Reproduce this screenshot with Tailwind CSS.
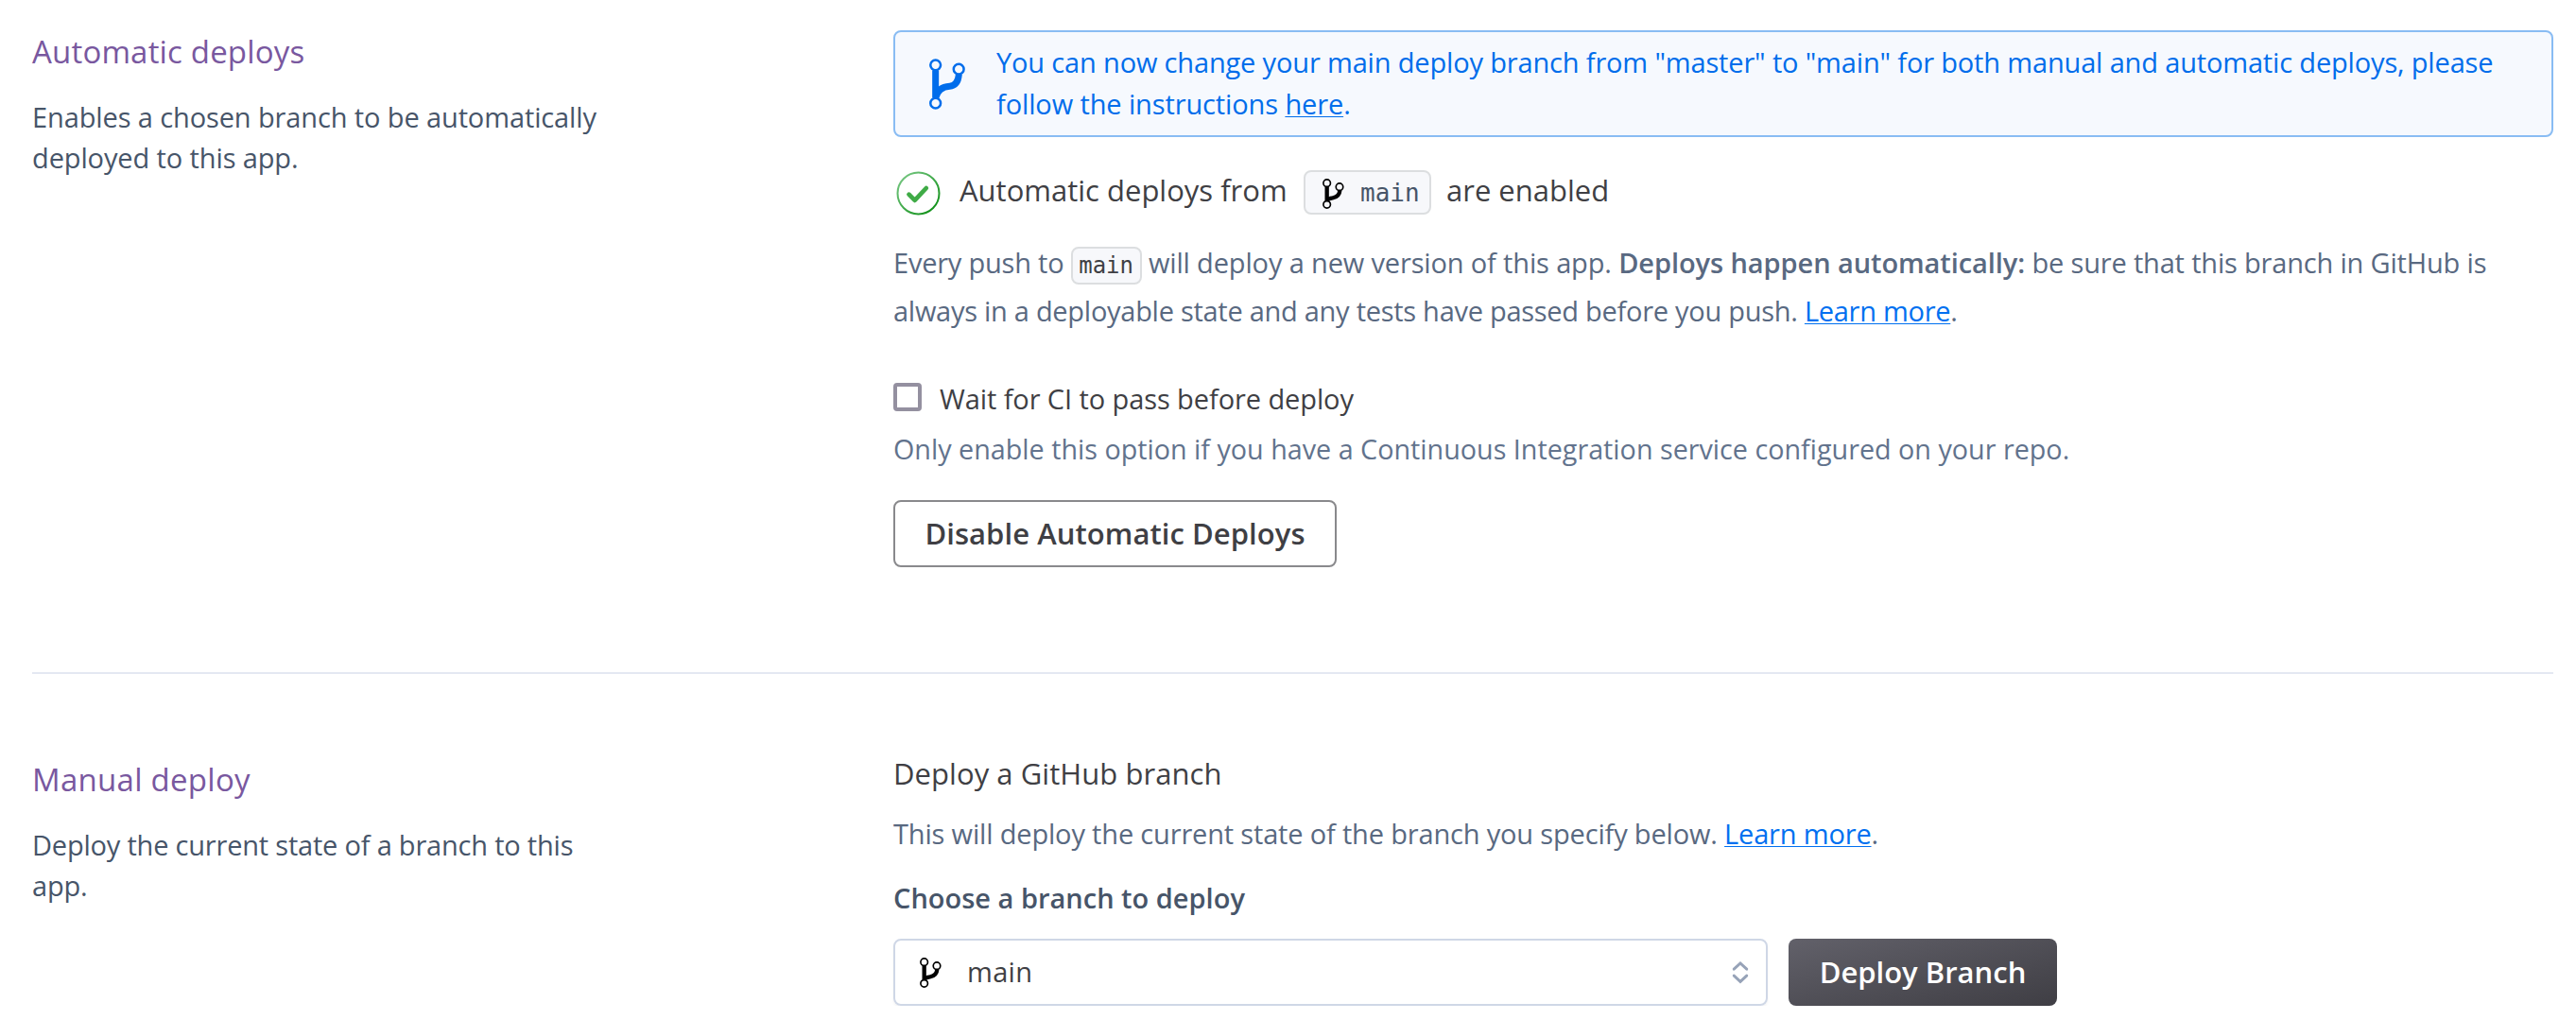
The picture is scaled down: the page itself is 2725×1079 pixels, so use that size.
<!DOCTYPE html>
<html lang="en">
<head>
<meta charset="utf-8">
<title>Deploy settings</title>
<script src="https://cdn.jsdelivr.net/npm/@tailwindcss/browser@4"></script>
</head>
<body class="bg-white font-['Open_Sans',sans-serif] text-[29px] text-[#3f3f44] whitespace-nowrap overflow-hidden">
<svg class="hidden">
  <symbol id="branch" viewBox="88 56 69 96">
    <g fill="none" stroke="currentColor">
      <g stroke-width="5"><circle cx="102" cy="70" r="11.3"/><circle cx="142" cy="82" r="11.3"/><circle cx="102" cy="138" r="11.3"/></g>
      <path stroke-width="13" d="M102 81v45"/>
      <path stroke-width="13" d="M143 93C142 107 133 115 120 117C112 118 106 119 102 125"/>
    </g>
  </symbol>
</svg>
<main class="pl-[34px] pr-6">
  <section class="flex h-[711px] pt-8">
    <div class="w-[911px] shrink-0 pt-[3px]">
      <h2 class="text-[33px] leading-10 tracking-[0.17px] text-[#79589f]">Automatic deploys</h2>
      <p class="mt-[27px] leading-[43px] tracking-[-0.117px] text-[#475569]">Enables a chosen branch to be automatically<br>deployed to this app.</p>
    </div>
    <div class="flex-1">
      <div class="flex h-[113px] rounded-lg border-2 border-[#89bcf3] bg-[#f6f9fe] pl-[36px] pt-[10px] text-[#006deb]">
        <svg class="mt-[18px] h-[54px] w-[38px]" viewBox="130 67 114 161" fill="none" stroke="currentColor">
          <g stroke-width="7.500"><circle cx="150" cy="87" r="16.2"/><circle cx="223.500" cy="100" r="16.200"/><circle cx="150" cy="208" r="16.200"/></g>
          <path stroke-width="21" d="M150 104v87M224 117C222 141 212 153 195 154C174 155 156 163 150 192"/>
        </svg>
        <p class="ml-[33px] leading-[44px] tracking-[-0.161px]">You can now change your main deploy branch from "master" to "main" for both manual and automatic deploys, please<br><span class="tracking-[-0.12px]">follow the instructions <a class="underline decoration-1 underline-offset-2">here</a>.</span></p>
      </div>
      <div class="mt-[35px] flex h-[47px] items-start text-[31px] leading-[42px]">
        <svg class="ml-[3px] mt-px size-[47px]" viewBox="0 0 47 47" fill="none">
          <defs><linearGradient id="ring" x1="0" y1="0" x2="1" y2="1"><stop offset="0" stop-color="#7fcb8b"/><stop offset="1" stop-color="#048a0c"/></linearGradient></defs>
          <circle cx="23.500" cy="23.500" r="22" stroke="url(#ring)" stroke-width="2"/>
          <path d="M13.500 24.700l6.200 6.200L31.800 18" stroke="#3fab46" stroke-width="4.700" stroke-linecap="round" stroke-linejoin="round"/>
        </svg>
        <span class="ml-[20px] w-[364px]">Automatic deploys from</span>
        <span class="flex h-[47px] w-[135px] rounded-lg border-2 border-[#dcdee0] bg-[#f7f8fb] pl-[18px]">
          <svg class="mt-[7px] h-8 w-[23px] text-black"><use href="#branch"/></svg>
          <span class="ml-[17px] font-['DejaVu_Sans_Mono',monospace] text-[26px] leading-[44px] text-[#475569]">main</span>
        </span>
        <span class="ml-[16px]">are enabled</span>
      </div>
      <p class="mt-[25px] leading-[51px] tracking-[-0.15px] text-[#596981]"><span class="tracking-[-0.22px]">Every push to </span><span class="inline-block rounded-lg border-2 border-[#dcdee0] bg-[#f7f8fb] px-[6.5px] pt-px font-['DejaVu_Sans_Mono',monospace] text-[24px] leading-[35px] tracking-normal text-[#3f3f44]">main</span> will deploy a new version of this app. <b class="font-semibold tracking-[-0.08px]">Deploys happen automatically:</b> <span class="tracking-[-0.18px]">be sure that this branch in GitHub is</span><br><span class="tracking-[-0.275px]">always in a deployable state and any tests have passed before you push. <a class="text-[#0070f0] underline decoration-1 underline-offset-2">Learn more</a>.</span></p>
      <label class="mt-[47px] flex leading-[42px] tracking-[-0.09px]"><span class="mt-1 size-[30px] rounded-[4px] border-4 border-[#9490a0]"></span><span class="ml-[19px]">Wait for CI to pass before deploy</span></label>
      <p class="mt-[10px] text-[28.72px] leading-[43px] text-[#62738d]">Only enable this option if you have a Continuous Integration service configured on your repo.</p>
      <button class="mt-[33px] flex h-[71px] w-[469px] items-center justify-center rounded-lg border-2 border-[#89898c] pb-[2px] text-[31px] leading-[42px] font-semibold tracking-[0.058px]">Disable Automatic Deploys</button>
    </div>
  </section>
  <section class="flex border-t-2 border-[#e4e8f2] pt-[84px]">
    <div class="w-[911px] shrink-0 pt-[8px]">
      <h2 class="text-[33px] leading-10 tracking-[0.264px] text-[#79589f]">Manual deploy</h2>
      <p class="mt-[27px] leading-[43px] tracking-[-0.203px] text-[#475569]">Deploy the current state of a branch to this<br>app.</p>
    </div>
    <div class="flex-1">
      <h3 class="text-[31px] leading-[42px] tracking-[0.06px]">Deploy a GitHub branch</h3>
      <p class="mt-[21px] leading-[43px] tracking-[-0.17px] text-[#596981]">This will deploy the current state of the branch you specify below. <a class="text-[#0070f0] underline decoration-1 underline-offset-2">Learn more</a>.</p>
      <p class="mt-[25px] leading-[43px] font-semibold text-[#475569]">Choose a branch to deploy</p>
      <div class="mt-[22px] flex gap-[22px]">
        <div class="flex h-[71px] w-[925px] rounded-lg border-2 border-[#cfd7e6] pl-[26px] pr-[18px] shadow-[0_2px_3px_rgba(0,0,0,0.05)]">
          <svg class="mt-[18px] h-8 w-[23px] text-black"><use href="#branch"/></svg>
          <span class="ml-[27px] flex-1 leading-[66px] tracking-[0.3px]">main</span>
          <svg class="mt-[21px] h-[25px] w-[18px]" viewBox="96 92 54 76" fill="none" stroke="#97a3b8" stroke-width="9" stroke-linecap="round"><path d="M102.500 120L123 101l20.500 19M102.500 141L123 160l20.500-19"/></svg>
        </div>
        <button class="flex h-[71px] w-[284px] items-center justify-center rounded-lg bg-linear-to-br from-[#62616a] to-[#3f3e44] pb-px text-[31px] leading-[42px] font-semibold text-white">Deploy Branch</button>
      </div>
    </div>
  </section>
</main>
</body>
</html>
